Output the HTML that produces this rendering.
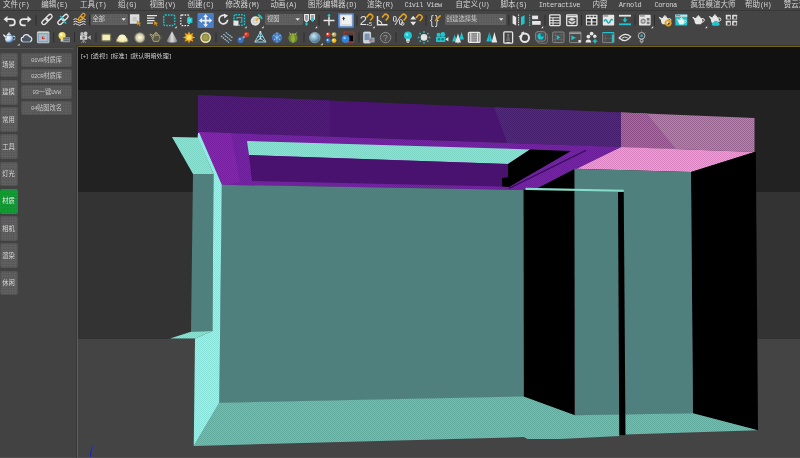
<!DOCTYPE html>
<html><head><meta charset="utf-8"><title>3ds Max</title>
<style>
html,body{margin:0;padding:0;background:#444;}
body{width:800px;height:458px;overflow:hidden;position:relative;font-family:"Liberation Mono",monospace;}
#root{position:absolute;left:0;top:0;width:800px;height:458px;background:#444444;overflow:hidden}
#menubar{position:absolute;left:0;top:0;width:800px;height:10px;background:#444}
#menuline{position:absolute;left:0;top:10px;width:800px;height:1px;background:#383838}
#toolbar{position:absolute;left:0;top:11px;width:800px;height:35px;background:#444}
#leftpanel{position:absolute;left:0;top:46px;width:77px;height:412px;background:#424242}
#leftline{position:absolute;left:0;top:48px;width:73px;height:1px;background:#545454}
.tab{position:absolute;left:0;width:18px;height:24.8px;border-radius:2px;background-color:#5f5f5f;background-image:radial-gradient(#474747 0.45px,rgba(71,71,71,0) 0.7px);background-size:2.5px 2.5px;box-shadow:inset 0 0 0 0.6px #4c4c4c}
.tab.g{background:#119c2d;box-shadow:none;background-image:radial-gradient(#1a7a58 0.45px,rgba(26,122,88,0) 0.7px);background-size:3.1px 3.1px;}
.btn{position:absolute;left:20.5px;width:51px;height:14.4px;border-radius:2px;background-color:#5c5c5c;background-image:radial-gradient(#474747 0.45px,rgba(71,71,71,0) 0.7px);background-size:2.5px 2.5px;box-shadow:inset 0 0 0 0.6px #4c4c4c}
#viewport{position:absolute;left:77px;top:46px;width:723px;height:412px;background:#111}
.band{position:absolute;left:0;width:723px}
#vpshadow{position:absolute;left:76px;top:45px;width:724px;height:413px;box-sizing:border-box;border-left:1px solid #383838;border-top:1px solid #383838;border-top-left-radius:2px}
#vpborder{border-top-left-radius:1.5px;position:absolute;left:77px;top:46px;width:723px;height:412px;box-sizing:border-box;border-left:1px solid #73621a;border-top:1px solid #73621a;}
svg{position:absolute;left:0;top:0;overflow:visible}
#txt{filter:blur(0.35px)}
#icons{filter:blur(0.3px)}
text{font-family:"Liberation Mono",monospace}
text.cj{font-family:"Liberation Sans","Noto Sans CJK SC",sans-serif}
.dd{position:absolute;top:14px;height:10.5px;background:#606060;border-radius:1px;background-image:radial-gradient(#4c4c4c 0.45px,rgba(76,76,76,0) 0.7px);background-size:2.5px 2.5px;}
</style></head><body><div id="root">
<div id="menubar"></div><div id="menuline"></div><div id="toolbar"></div>
<div class="dd" style="left:90.5px;width:37px"></div>
<div class="dd" style="left:265px;width:37.5px"></div>
<div class="dd" style="left:444.5px;width:61px"></div>
<div id="leftpanel"></div><div id="leftline"></div>
<div class="tab" style="top:52.6px"></div><div class="tab" style="top:79.8px"></div><div class="tab" style="top:107.1px"></div><div class="tab" style="top:134.3px"></div><div class="tab" style="top:161.6px"></div><div class="tab g" style="top:188.8px"></div><div class="tab" style="top:216.1px"></div><div class="tab" style="top:243.3px"></div><div class="tab" style="top:270.6px"></div><div class="btn" style="top:52.5px"></div><div class="btn" style="top:68.5px"></div><div class="btn" style="top:84.5px"></div><div class="btn" style="top:100.5px"></div>
<div id="viewport">
<div class="band" style="top:0;height:44px;background:#111111"></div>
<div class="band" style="top:44px;height:101.5px;background:#222222"></div>
<div class="band" style="top:145.5px;height:147px;background:#333333"></div>
<div class="band" style="top:292.5px;height:120px;background:#444444"></div>
</div>
<svg id="scene" width="800" height="458" viewBox="0 0 800 458" shape-rendering="geometricPrecision"><defs><pattern id="pfloor" width="2" height="2" patternUnits="userSpaceOnUse"><rect width="2" height="2" fill="#72c0a8"/><rect width="1" height="1" fill="#60aa9e"/><rect x="1" y="1" width="1" height="1" fill="#60aa9e"/></pattern><pattern id="pstrip" width="2" height="2" patternUnits="userSpaceOnUse"><rect width="2" height="2" fill="#9ef0e8"/><rect width="1" height="1" fill="#88e2da"/><rect x="1" y="1" width="1" height="1" fill="#88e2da"/></pattern><pattern id="pcyan" width="2" height="2" patternUnits="userSpaceOnUse"><rect width="2" height="2" fill="#8fe2d1"/><rect width="1" height="1" fill="#7dd6c5"/><rect x="1" y="1" width="1" height="1" fill="#7dd6c5"/></pattern><pattern id="ppinku" width="2" height="2" patternUnits="userSpaceOnUse"><rect width="2" height="2" fill="#eba0d3"/><rect width="1" height="1" fill="#d984c1"/><rect x="1" y="1" width="1" height="1" fill="#d984c1"/></pattern><pattern id="ppinkf" width="2" height="2" patternUnits="userSpaceOnUse"><rect width="2" height="2" fill="#bd80ae"/><rect width="1" height="1" fill="#97648f"/><rect x="1" y="1" width="1" height="1" fill="#97648f"/></pattern><pattern id="ppinkf2" width="2" height="2" patternUnits="userSpaceOnUse"><rect width="2" height="2" fill="#ae6aa4"/><rect width="1" height="1" fill="#8a4a84"/><rect x="1" y="1" width="1" height="1" fill="#8a4a84"/></pattern><pattern id="plp" width="2" height="2" patternUnits="userSpaceOnUse"><rect width="2" height="2" fill="#7a24ab"/><rect width="1" height="1" fill="#6a1c99"/><rect x="1" y="1" width="1" height="1" fill="#6a1c99"/></pattern><pattern id="plp2" width="2" height="2" patternUnits="userSpaceOnUse"><rect width="2" height="2" fill="#8628b2"/><rect width="1" height="1" fill="#781ea0"/><rect x="1" y="1" width="1" height="1" fill="#781ea0"/></pattern><pattern id="pdp1" width="2" height="2" patternUnits="userSpaceOnUse"><rect width="2" height="2" fill="#521c80"/><rect width="1" height="1" fill="#46146c"/><rect x="1" y="1" width="1" height="1" fill="#46146c"/></pattern><pattern id="pdp3" width="2" height="2" patternUnits="userSpaceOnUse"><rect width="2" height="2" fill="#522a84"/><rect width="1" height="1" fill="#461e6e"/><rect x="1" y="1" width="1" height="1" fill="#461e6e"/></pattern></defs>
<!-- top front face dark purple -->
<polygon points="198,95 621,112.5 621,147 198,132" fill="#481470"/>
<polygon points="198,95 330,100.5 330,136.7 198,132" fill="url(#pdp1)"/>
<polygon points="494,107.3 621,112.5 621,147 507.5,143" fill="url(#pdp3)"/>
<!-- pink front face -->
<polygon points="621,112.5 754.5,118 754.5,152 621,147" fill="url(#ppinkf)"/>
<polygon points="621,112.5 647,113.6 676,149 621,147" fill="url(#ppinkf2)"/>
<!-- pink underside -->
<polygon points="621,147 754.5,152 691,172 575,168.75" fill="url(#ppinku)"/>
<!-- light purple underside frame -->
<polygon points="198,132 621,147 537,188.5 523,190 222,185" fill="url(#plp)"/>
<polygon points="198,132 231,133.2 240,182 222,185" fill="url(#plp2)"/>
<!-- recess: cyan panel -->
<polygon points="247,141 530,149.4 508,164 249,155" fill="url(#pcyan)"/>
<!-- recess: inner dark face -->
<polygon points="249,155 508,164 508,177 502,178 502,186.5 252,181" fill="#48126e"/>
<!-- recess: black -->
<polygon points="530,149.4 571,151 509,187 502,186.5 502,178 508,177 508,164" fill="#000"/>
<!-- beam groove -->
<line x1="586" y1="150.3" x2="509" y2="188.3" stroke="#3a1060" stroke-width="1.5"/>
<!-- black door + triangle -->
<polygon points="523.3,190 537,188.5 574.5,169 574.5,416 523.75,397" fill="#000"/>
<!-- right black region -->
<polygon points="691,172 754.5,152 755.8,152 758,430.5 693,413.5" fill="#000"/>
<!-- left outside cyan triangle -->
<polygon points="172,137 198,137.4 213.5,174 193,174" fill="url(#pcyan)"/>
<!-- left teal segment -->
<polygon points="193,174 213.5,174 212.5,331 191,331.75" fill="#4f807d"/>
<!-- small sticking quad -->
<polygon points="170,338.5 191,331.75 212.5,331 195,338.5" fill="url(#pcyan)"/>
<!-- back wall -->
<polygon points="221.5,184.8 523.5,190 523.75,397 219.25,403" fill="#4f807d"/>
<!-- right walls -->
<polygon points="574.5,168.75 691,172 693,413.5 575,415.5" fill="#4f807d"/>
<!-- floor -->
<polygon points="219.25,402.75 523.75,396.5 575,415.25 693,413.25 758,430.25 625.5,434.5 620,436 560,439 527.5,439 523.75,437 360,441.5 193.75,446" fill="url(#pfloor)"/>
<!-- light strip left -->
<polygon points="198,133 199.3,133 221.8,184.8 219.25,402.75 193.75,446 195,338.5 212.5,331 213.5,174 197.6,137.4" fill="url(#pstrip)"/>
<!-- light cyan strip over door -->
<polygon points="525.5,187.7 623.75,189.7 623.75,191.8 525.5,189.9" fill="#86dcc9"/>
<!-- black sliver -->
<polygon points="618,192 623.75,192 625.5,435 619.25,435.7" fill="#000"/>
<!-- axis -->
<path d="M91.6 449.5Q90.6 451 90.6 458" stroke="#1c22b8" stroke-width="1.1" fill="none"/>
<path d="M91.4 445.8h2.2l-2 2.6h2.2" stroke="#2430d8" stroke-width="0.8" fill="none"/>
</svg>

<div style="position:absolute;left:0;top:457px;width:800px;height:1px;background:#505050"></div><div id="vpshadow"></div><div id="vpborder"></div>
<svg id="icons" width="800" height="458" viewBox="0 0 800 458"><rect x="35.50" y="15.00" width="1" height="10.50" fill="#2c2c2c"/><rect x="89.00" y="15.00" width="1" height="10.50" fill="#2c2c2c"/><rect x="318.50" y="15.00" width="1" height="10.50" fill="#2c2c2c"/><rect x="356.50" y="15.00" width="1" height="10.50" fill="#2c2c2c"/><rect x="425.50" y="15.00" width="1" height="10.50" fill="#2c2c2c"/><rect x="508.25" y="15.00" width="1" height="10.50" fill="#2c2c2c"/><rect x="544.50" y="15.00" width="1" height="10.50" fill="#2c2c2c"/><rect x="581.00" y="15.00" width="1" height="10.50" fill="#2c2c2c"/><rect x="634.50" y="15.00" width="1" height="10.50" fill="#2c2c2c"/><rect x="654.00" y="15.00" width="1" height="10.50" fill="#2c2c2c"/><rect x="53.25" y="32.50" width="1" height="10.00" fill="#2c2c2c"/><rect x="74.00" y="32.50" width="1" height="10.00" fill="#2c2c2c"/><rect x="95.50" y="32.50" width="1" height="10.00" fill="#2c2c2c"/><rect x="215.50" y="32.50" width="1" height="10.00" fill="#2c2c2c"/><rect x="303.50" y="32.50" width="1" height="10.00" fill="#2c2c2c"/><rect x="358.50" y="32.50" width="1" height="10.00" fill="#2c2c2c"/><rect x="395.50" y="32.50" width="1" height="10.00" fill="#2c2c2c"/><g transform="translate(3.50 13.00)"><path d="M2.5 6.2H8.3A3.1 3.1 0 0 1 8.3 12.4H5.8" fill="none" stroke="#e6e6e6" stroke-width="1.7"/><path d="M0 6.2L4 3V9.4z" fill="#e6e6e6"/></g><g transform="translate(31.50 13.00)"><g transform="scale(-1 1)"><path d="M2.5 6.2H8.3A3.1 3.1 0 0 1 8.3 12.4H5.8" fill="none" stroke="#e6e6e6" stroke-width="1.7"/><path d="M0 6.2L4 3V9.4z" fill="#e6e6e6"/></g></g><g transform="translate(41.00 12.50)"><g transform="rotate(-45 6 7)" fill="none" stroke="#e6e6e6" stroke-width="1.3"><rect x="-0.4" y="5" width="7.2" height="4" rx="2"/><rect x="5.2" y="5" width="7.2" height="4" rx="2"/></g></g><g transform="translate(57.00 12.50)"><g transform="rotate(-45 6 7)" fill="none" stroke="#e6e6e6" stroke-width="1.3"><rect x="-0.4" y="5" width="7.2" height="4" rx="2"/><rect x="5.2" y="5" width="7.2" height="4" rx="2"/></g><path d="M3.2 3.5L6.2 6.5M6.5 8.2L9.2 11" stroke="#1fc4cc" stroke-width="1.4"/></g><g transform="translate(73.00 13.00)"><path d="M0.5 6.5q2 -1.6 4 0t4 0t4 0M0.5 9q2 -1.6 4 0t4 0t4 0M0.5 11.5q2 -1.6 4 0t4 0t4 0" fill="none" stroke="#e6e6e6" stroke-width="1"/><g transform="rotate(-50 8.5 4.5)" fill="none" stroke="#e8a21c" stroke-width="1.2"><rect x="4.5" y="2.9" width="5" height="3" rx="1.5"/><rect x="8.3" y="2.9" width="5" height="3" rx="1.5"/></g></g><g transform="translate(130.00 13.00)"><rect x="0.3" y="1.8" width="8.6" height="8.4" fill="#d9d9d9" stroke="#f0f0f0" stroke-width="0.8"/><rect x="2.6" y="4" width="4" height="4" fill="#c4c4c4"/><path d="M7 8l4.2 2.2l-1.7 0.5l1 2l-0.9 0.5l-1 -2l-1.3 1.3z" fill="#e8a21c" stroke="#7a5200" stroke-width="0.3"/></g><g transform="translate(147.00 13.00)"><path d="M0 2.7H10M0 5.2H7.5M0 7.7H7.5M0 10.2H6" stroke="#e6e6e6" stroke-width="1.3"/><path d="M7 8l4.2 2.2l-1.7 0.5l1 2l-0.9 0.5l-1 -2l-1.3 1.3z" fill="#e8a21c" stroke="#7a5200" stroke-width="0.3"/></g><g transform="translate(162.50 13.00)"><rect x="1.2" y="2" width="11" height="10.6" rx="1.5" fill="none" stroke="#1fc4cc" stroke-width="1.5" stroke-dasharray="1.7 1.1"/></g><path d="M174.50 28.30l2.2 -2.2v2.2z" fill="#e0e0e0"/><g transform="translate(180.00 13.00)"><rect x="0.8" y="2" width="8.2" height="10.6" rx="1" fill="none" stroke="#e6e6e6" stroke-width="1.3" stroke-dasharray="1.6 1.2"/><rect x="7" y="4.6" width="5.4" height="5.4" fill="#1fc4cc"/><rect x="8.4" y="6" width="2.6" height="2.6" fill="#4fe0e6"/></g><rect x="197.5" y="13" width="16.3" height="15" rx="1" fill="#4b7fc9"/><g transform="translate(198.60 13.40)"><path d="M7 0.6L9.5 3.6H7.9V6.3H10.6V4.7L13.6 7.2L10.6 9.7V8.1H7.9V10.8H9.5L7 13.8L4.5 10.8H6.1V8.1H3.4V9.7L0.4 7.2L3.4 4.7V6.3H6.1V3.6H4.5z" fill="#eeeeee"/></g><g transform="translate(217.50 13.00)"><path d="M8.6 3.3A4.3 4.3 0 1 0 10.1 6.8" fill="none" stroke="#e6e6e6" stroke-width="1.7"/><path d="M6.3 0.6L10.6 2.6L6.8 5.6z" fill="#e6e6e6"/></g><g transform="translate(232.50 13.00)"><rect x="1.6" y="1.8" width="10.4" height="10.4" rx="1.3" fill="none" stroke="#1fc4cc" stroke-width="1.5" stroke-dasharray="1.7 1.1"/><rect x="1" y="7.6" width="5" height="5" fill="#e6e6e6"/><path d="M4.5 6V4.5H9.3V9.3H7.8" fill="none" stroke="#1fc4cc" stroke-width="1.1"/></g><path d="M244.50 28.30l2.2 -2.2v2.2z" fill="#e0e0e0"/><g transform="translate(250.00 13.00)"><circle cx="5.4" cy="8" r="4.7" fill="#e2e2e2"/><circle cx="5.4" cy="8" r="2.3" fill="none" stroke="#bdbdbd" stroke-width="0.8"/><path d="M8 1.8A5 5 0 0 1 11.8 6.2" fill="none" stroke="#1fc4cc" stroke-width="1.7"/><path d="M5.6 7.8L9.6 3.8" stroke="#e8a21c" stroke-width="1.6"/></g><path d="M261.50 28.30l2.2 -2.2v2.2z" fill="#e0e0e0"/><g transform="translate(303.50 13.00)"><path d="M1 1.5H5V7L3 9L1 7zM7 1.5H11V6L9 8L7 6z" fill="#9a9a9a" stroke="#e6e6e6" stroke-width="1.1"/><path d="M3 9L4.6 11L3 13L1.4 11zM9 4.6L10.8 6.8L9 9L7.2 6.8z" fill="#1fc4cc"/></g><path d="M315.00 28.30l2.2 -2.2v2.2z" fill="#e0e0e0"/><g transform="translate(323.00 13.00)"><path d="M6 3.5V12.5M0.5 7.6H11.5" stroke="#e6e6e6" stroke-width="1.5"/><circle cx="6" cy="2.2" r="1.3" fill="#1fc4cc"/></g><rect x="338" y="13" width="16" height="15" rx="1.2" fill="#4b7fc9"/><g transform="translate(339.70 14.60)"><rect x="0" y="0" width="12.6" height="11.6" rx="1" fill="#dedede"/><rect x="1.6" y="1.2" width="9.4" height="8.2" rx="0.6" fill="#f2f2f2"/><path d="M3.9 2.2L5.6 4.2H4.5V5.6H3.3V4.2H2.2z" fill="#333"/></g><g transform="translate(360.00 13.00)"><text x="-0.3" y="12.4" font-size="13" fill="#e6e6e6" style="font-family:'Liberation Sans',sans-serif">2</text><rect x="7.2" y="11" width="1.3" height="1.3" fill="#e6e6e6"/><text x="9" y="12.6" font-size="5.5" fill="#e6e6e6" style="font-family:'Liberation Sans',sans-serif">5</text><g transform="translate(10 4) rotate(40)"><path d="M-2.4 2.6V-0.4A2.4 2.4 0 0 1 2.4 -0.4V2.6" fill="none" stroke="#e8a21c" stroke-width="1.5"/></g></g><path d="M372.50 28.30l2.2 -2.2v2.2z" fill="#e0e0e0"/><g transform="translate(376.00 13.00)"><path d="M1.5 3V11.8H11.5" fill="none" stroke="#e6e6e6" stroke-width="1.4"/><path d="M1.5 7.5A4.4 4.4 0 0 1 6 11.8" fill="none" stroke="#e6e6e6" stroke-width="1.1"/><g transform="translate(9.5 4) rotate(40)"><path d="M-2.4 2.6V-0.4A2.4 2.4 0 0 1 2.4 -0.4V2.6" fill="none" stroke="#e8a21c" stroke-width="1.5"/></g></g><g transform="translate(392.50 13.00)"><text x="0" y="12.3" font-size="12" fill="#e6e6e6" style="font-family:'Liberation Sans',sans-serif">%</text><g transform="translate(11 4) rotate(40)"><path d="M-2.4 2.6V-0.4A2.4 2.4 0 0 1 2.4 -0.4V2.6" fill="none" stroke="#e8a21c" stroke-width="1.5"/></g></g><g transform="translate(410.00 13.00)"><path d="M3.2 2.8L6.2 6.6H0.2zM3.2 12.6L6.2 8.8H0.2z" fill="#e6e6e6"/><g transform="translate(9.5 4.6) rotate(40)"><path d="M-2.4 2.6V-0.4A2.4 2.4 0 0 1 2.4 -0.4V2.6" fill="none" stroke="#e8a21c" stroke-width="1.5"/></g></g><circle cx="402.5" cy="23.8" r="1.5" fill="none" stroke="#e0e0e0" stroke-width="0.9"/><g transform="translate(430.00 13.00)"><text x="-0.3" y="11.4" font-size="12" fill="#cfcfcf" style="font-family:'Liberation Sans',sans-serif" letter-spacing="1">{}</text><path d="M5.2 7.8L10.6 2.4" stroke="#e8a21c" stroke-width="1.5"/></g><g transform="translate(512.00 13.00)"><path d="M0.6 2.2L4.2 4V12.4L0.6 10.4z" fill="#e6e6e6"/><path d="M12.6 2.2L9 4V12.4L12.6 10.4z" fill="#1fc4cc"/><path d="M6.6 1.5V13" stroke="#e6e6e6" stroke-width="1" stroke-dasharray="1.4 1"/></g><g transform="translate(528.50 13.00)"><path d="M1.2 1.6V13" stroke="#1fc4cc" stroke-width="1.2" stroke-dasharray="1.5 1"/><rect x="3.6" y="2.6" width="6" height="3.6" fill="#e6e6e6"/><rect x="3.6" y="8" width="8.6" height="3.8" fill="#e6e6e6"/></g><path d="M541.00 28.30l2.2 -2.2v2.2z" fill="#e0e0e0"/><g transform="translate(549.00 13.00)"><rect x="0.7" y="1.8" width="10.4" height="10.8" rx="0.8" fill="none" stroke="#e6e6e6" stroke-width="1.3"/><path d="M0.7 4.8H11.1M0.7 7.4H11.1M0.7 10H11.1M4 4.8V12.6" stroke="#e6e6e6" stroke-width="1"/></g><g transform="translate(566.00 13.00)"><rect x="0.7" y="1.8" width="10.4" height="10.8" rx="0.8" fill="none" stroke="#e6e6e6" stroke-width="1.3"/><path d="M0.7 3.6H11.1" stroke="#e6e6e6" stroke-width="1.6"/><path d="M5.9 5L9.2 6.4L5.9 7.8L2.6 6.4zM2.6 8L5.9 9.4L9.2 8V9L5.9 10.4L2.6 9zM2.6 9.8L5.9 11.2L9.2 9.8" fill="#e6e6e6" stroke="#e6e6e6" stroke-width="0.4"/></g><g transform="translate(585.60 13.00)"><rect x="0.3" y="1.8" width="11.6" height="10.8" rx="0.8" fill="#e6e6e6"/><rect x="1.4" y="2.8" width="2.4" height="1.5" fill="#444"/><rect x="4.8" y="2.8" width="2.4" height="1.5" fill="#444"/><rect x="8.2" y="2.8" width="2.4" height="1.5" fill="#444"/><rect x="1.4" y="6" width="3.8" height="2.4" fill="#333"/><rect x="6.8" y="6" width="3.8" height="2.4" fill="#333"/><rect x="1.4" y="9.4" width="3.8" height="2.2" fill="#333"/><rect x="6.8" y="9.4" width="3.8" height="2.2" fill="#333"/></g><g transform="translate(602.50 13.00)"><rect x="0.3" y="1.8" width="11.4" height="10.8" rx="0.8" fill="#e6e6e6"/><rect x="1" y="2.4" width="4.6" height="1.1" fill="#777"/><path d="M1.6 8.4q1.5 -3.4 3 0t3 0t2.6 -1" fill="none" stroke="#12a8b0" stroke-width="1.4"/></g><g transform="translate(618.75 13.00)"><rect x="0.2" y="1.8" width="12" height="1.8" fill="#e6e6e6"/><rect x="0.2" y="10.4" width="12" height="1.8" fill="#1fc4cc"/><path d="M6.2 4.4V8" stroke="#1fc4cc" stroke-width="1.6"/><path d="M3.6 6.6H8.8L6.2 9.6z" fill="#1fc4cc"/></g><g transform="translate(638.75 13.00)"><rect x="0.3" y="1.8" width="11.6" height="10.8" rx="0.8" fill="#e6e6e6"/><rect x="1" y="2.4" width="5" height="1.1" fill="#777"/><circle cx="4.4" cy="8.2" r="2.6" fill="#8a8a8a"/><circle cx="4.4" cy="8.2" r="1.2" fill="#c8c8c8"/><rect x="8" y="5" width="2.8" height="2.6" fill="#777"/><rect x="8" y="8.6" width="2.8" height="2.6" fill="#777"/></g><path d="M651.00 28.30l2.2 -2.2v2.2z" fill="#e0e0e0"/><g transform="translate(658.50 13.00)"><g transform="translate(0 0.00)"><path d="M2.9 5.2Q6.4 3.9 9.9 5.2Q11.2 8.6 8.8 11.2H4Q1.6 8.6 2.9 5.2z" fill="#e6e6e6"/><path d="M3.4 8.2L0.3 4.4L1.2 3.8L4.2 6z" fill="#e6e6e6"/><path d="M10 5.6Q12.8 5.4 12.4 7.4Q12 9 9.8 9.4" fill="none" stroke="#e6e6e6" stroke-width="1"/><ellipse cx="6.4" cy="4.2" rx="2.2" ry="0.9" fill="#e6e6e6"/><circle cx="6.4" cy="3" r="0.85" fill="#e6e6e6"/></g><circle cx="9.6" cy="10" r="2.5" fill="none" stroke="#e8a21c" stroke-width="1.7"/><circle cx="9.6" cy="10" r="3.2" fill="none" stroke="#e8a21c" stroke-width="0.9" stroke-dasharray="1 0.9"/></g><g transform="translate(675.00 13.00)"><rect x="0.3" y="1.6" width="12" height="11" rx="0.8" fill="#1fc4cc"/><rect x="0.3" y="1.6" width="12" height="2.2" fill="#d8d8d8"/><rect x="1" y="2.2" width="4.2" height="1" fill="#777"/><g transform="translate(1.3 2.6) scale(0.8)"><g transform="translate(0 0.00)"><path d="M2.9 5.2Q6.4 3.9 9.9 5.2Q11.2 8.6 8.8 11.2H4Q1.6 8.6 2.9 5.2z" fill="#f0f0f0"/><path d="M3.4 8.2L0.3 4.4L1.2 3.8L4.2 6z" fill="#f0f0f0"/><path d="M10 5.6Q12.8 5.4 12.4 7.4Q12 9 9.8 9.4" fill="none" stroke="#f0f0f0" stroke-width="1"/><ellipse cx="6.4" cy="4.2" rx="2.2" ry="0.9" fill="#f0f0f0"/><circle cx="6.4" cy="3" r="0.85" fill="#f0f0f0"/></g></g></g><g transform="translate(692.00 13.00)"><g transform="translate(0 0.00)"><path d="M2.9 5.2Q6.4 3.9 9.9 5.2Q11.2 8.6 8.8 11.2H4Q1.6 8.6 2.9 5.2z" fill="#e6e6e6"/><path d="M3.4 8.2L0.3 4.4L1.2 3.8L4.2 6z" fill="#e6e6e6"/><path d="M10 5.6Q12.8 5.4 12.4 7.4Q12 9 9.8 9.4" fill="none" stroke="#e6e6e6" stroke-width="1"/><ellipse cx="6.4" cy="4.2" rx="2.2" ry="0.9" fill="#e6e6e6"/><circle cx="6.4" cy="3" r="0.85" fill="#e6e6e6"/></g></g><path d="M705.00 28.30l2.2 -2.2v2.2z" fill="#e0e0e0"/><g transform="translate(708.50 12.20)"><g transform="translate(0 0.00)"><path d="M2.9 5.2Q6.4 3.9 9.9 5.2Q11.2 8.6 8.8 11.2H4Q1.6 8.6 2.9 5.2z" fill="#e6e6e6"/><path d="M3.4 8.2L0.3 4.4L1.2 3.8L4.2 6z" fill="#e6e6e6"/><path d="M10 5.6Q12.8 5.4 12.4 7.4Q12 9 9.8 9.4" fill="none" stroke="#e6e6e6" stroke-width="1"/><ellipse cx="6.4" cy="4.2" rx="2.2" ry="0.9" fill="#e6e6e6"/><circle cx="6.4" cy="3" r="0.85" fill="#e6e6e6"/></g><path d="M4.4 13.6A1.9 1.9 0 0 1 5 10A2.6 2.6 0 0 1 9.8 10.4A1.7 1.7 0 0 1 10.2 13.6z" fill="#1fc4cc"/></g><g transform="translate(725.80 13.00)"><rect x="0.0" y="1.8" width="5" height="4.6" rx="0.5" fill="#dcdcdc"/><rect x="1.6" y="3.4" width="2.6" height="2.4" fill="#444"/><rect x="0.0" y="7.8" width="5" height="4.6" rx="0.5" fill="#dcdcdc"/><rect x="1.6" y="9.4" width="2.6" height="2.4" fill="#444"/><rect x="6.3" y="1.8" width="5" height="4.6" rx="0.5" fill="#dcdcdc"/><rect x="7.9" y="3.4" width="2.6" height="2.4" fill="#444"/><rect x="6.3" y="7.8" width="5" height="4.6" rx="0.5" fill="#dcdcdc"/><rect x="7.9" y="9.4" width="2.6" height="2.4" fill="#444"/></g><defs><radialGradient id="rgb" cx="0.35" cy="0.35" r="0.7"><stop offset="0" stop-color="#fff"/><stop offset="0.55" stop-color="#c4dcf0"/><stop offset="1" stop-color="#3c74ae"/></radialGradient><radialGradient id="rgy" cx="0.5" cy="0.5" r="0.5"><stop offset="0" stop-color="#fffbe0"/><stop offset="0.7" stop-color="#e8e0a8"/><stop offset="1" stop-color="#8a845a"/></radialGradient><radialGradient id="rgs" cx="0.4" cy="0.35" r="0.7"><stop offset="0" stop-color="#cfe6f2"/><stop offset="0.6" stop-color="#6fa0bc"/><stop offset="1" stop-color="#34566c"/></radialGradient><linearGradient id="lgc" x1="0" x2="1"><stop offset="0" stop-color="#666"/><stop offset="0.5" stop-color="#ddd"/><stop offset="1" stop-color="#777"/></linearGradient></defs><g transform="translate(2.40 28.80)"><g transform="scale(1.05 1.12)"><g transform="translate(0 1.00)"><path d="M2.9 5.2Q6.4 3.9 9.9 5.2Q11.2 8.6 8.8 11.2H4Q1.6 8.6 2.9 5.2z" fill="url(#rgb)"/><path d="M3.4 8.2L0.3 4.4L1.2 3.8L4.2 6z" fill="url(#rgb)"/><path d="M10 5.6Q12.8 5.4 12.4 7.4Q12 9 9.8 9.4" fill="none" stroke="url(#rgb)" stroke-width="1"/><ellipse cx="6.4" cy="4.2" rx="2.2" ry="0.9" fill="url(#rgb)"/><circle cx="6.4" cy="3" r="0.85" fill="url(#rgb)"/></g></g></g><path d="M17.40 45.60l2.2 -2.2v2.2z" fill="#e0e0e0"/><g transform="translate(20.00 30.00)"><path d="M2.6 11.6A2.3 2.3 0 0 1 3 7.2A3.6 3.6 0 0 1 9.6 6.6A2.6 2.6 0 0 1 10.2 11.6z" fill="#4a5560" stroke="#e8eef6" stroke-width="1.2"/><path d="M2.6 11.6H10.2" stroke="#5b8fd0" stroke-width="1.2"/></g><g transform="translate(37.00 30.00)"><rect x="0.4" y="1.8" width="11.6" height="11" rx="0.6" fill="#8b9fb4" stroke="#cfd9e4" stroke-width="0.8"/><rect x="2" y="4.2" width="8.4" height="7" fill="#a9bdd0"/><circle cx="6.2" cy="7.8" r="1.5" fill="#d83020"/><circle cx="6.9" cy="7.2" r="0.8" fill="#f0d040"/><path d="M0.4 2.6H12" stroke="#d4e0d0" stroke-width="0.9"/></g><g transform="translate(57.50 30.00)"><circle cx="4.6" cy="5.6" r="3.6" fill="#f1dc62"/><circle cx="3.8" cy="4.6" r="1.6" fill="#fff8c0"/><rect x="3.2" y="9" width="2.8" height="2.6" fill="#d8d8d8"/><rect x="5.4" y="7.2" width="7" height="5" rx="0.5" fill="#8d97a2"/><path d="M6.2 8.6H11.6M6.2 10.4H11.6" stroke="#586068" stroke-width="0.8"/></g><g transform="translate(78.00 30.00)"><circle cx="4" cy="3.8" r="1.7" fill="#b8b8b8"/><circle cx="7.6" cy="3.4" r="1.9" fill="#c4c4c4"/><rect x="2" y="5.2" width="7.2" height="4.6" rx="0.6" fill="#d2d2d2"/><circle cx="5.6" cy="7.5" r="1.3" fill="#6a6a6a"/><path d="M9.2 7.5L12.8 5.2V9.8z" fill="#b0b0b0"/><path d="M5.6 9.8L3.4 13M5.6 9.8V13M5.6 9.8L7.8 13" stroke="#a0a0a0" stroke-width="0.8"/></g><g transform="translate(101.00 30.00)"><rect x="0.2" y="3.6" width="10" height="7.8" rx="1.4" fill="#7d7a56"/><rect x="1.4" y="4.8" width="7.6" height="5.4" rx="0.6" fill="#f3eeb8"/></g><g transform="translate(116.00 30.00)"><path d="M0.4 11.6A5.8 6.4 0 0 1 12 11.6Q6.2 13.4 0.4 11.6z" fill="#efe9b0" stroke="#8a845a" stroke-width="0.9"/><ellipse cx="6.2" cy="7.6" rx="3.6" ry="3" fill="#f8f4c8"/></g><g transform="translate(134.00 30.00)"><circle cx="5.8" cy="7.6" r="5.4" fill="#8e8a70"/><circle cx="5.8" cy="7.6" r="4.2" fill="#d9d5b4"/><circle cx="5.8" cy="7.6" r="2" fill="#f5f2d4"/></g><g transform="translate(149.60 30.20)"><g stroke="#b9b27c" stroke-width="0.8" stroke-linejoin="round"><g transform="translate(0 0.00)"><path d="M2.9 5.2Q6.4 3.9 9.9 5.2Q11.2 8.6 8.8 11.2H4Q1.6 8.6 2.9 5.2z" fill="#5e5b44"/><path d="M3.4 8.2L0.3 4.4L1.2 3.8L4.2 6z" fill="#5e5b44"/><path d="M10 5.6Q12.8 5.4 12.4 7.4Q12 9 9.8 9.4" fill="none" stroke="#5e5b44" stroke-width="1"/><ellipse cx="6.4" cy="4.2" rx="2.2" ry="0.9" fill="#5e5b44"/><circle cx="6.4" cy="3" r="0.85" fill="#5e5b44"/></g></g></g><g transform="translate(166.00 30.00)"><path d="M6 1.2L11.6 11.4Q6 13.8 0.4 11.4z" fill="url(#lgc)"/></g><g transform="translate(183.00 30.00)"><polygon points="6.00,1.20 7.30,4.26 10.38,3.02 9.14,6.10 12.20,7.40 9.14,8.70 10.38,11.78 7.30,10.54 6.00,13.60 4.70,10.54 1.62,11.78 2.86,8.70 -0.20,7.40 2.86,6.10 1.62,3.02 4.70,4.26" fill="#f0a418"/><circle cx="6" cy="7.4" r="2.6" fill="#f8d84a"/><path d="M4.6 8.6L7.6 5.8" stroke="#fff2a0" stroke-width="0.9"/></g><g transform="translate(200.00 30.00)"><circle cx="5.6" cy="7.6" r="5.4" fill="#f0e8a8"/><circle cx="5.6" cy="7.6" r="4" fill="#8e8a48"/><circle cx="5.6" cy="7.6" r="2.6" fill="#a39c50"/></g><g transform="translate(220.00 30.00)"><path d="M1 6L9 12.6M3.4 4.2L11.4 10.8M5.8 2.4L13 8.2" stroke="#9fc6e4" stroke-width="1.2" stroke-dasharray="1.6 0.7"/></g><g transform="translate(237.00 30.00)"><path d="M3.4 10L9.6 4.6" stroke="#90a0b8" stroke-width="2.2"/><circle cx="9.6" cy="4.6" r="2.7" fill="#d43828"/><circle cx="9" cy="3.9" r="1" fill="#f09080"/><circle cx="3.6" cy="10" r="3.1" fill="#3b6fb8"/><circle cx="2.9" cy="9.2" r="1.1" fill="#8ab4e8"/></g><g transform="translate(254.00 30.00)"><path d="M6.4 2L12 12H0.8zM6.4 2V8.6M0.8 12L6.4 8.6L12 12M3.4 6.6L9.4 6.6" fill="none" stroke="#8fd2e8" stroke-width="1"/><circle cx="6.4" cy="2" r="1" fill="#c8ecf8"/><circle cx="6.4" cy="8.6" r="1" fill="#c8ecf8"/></g><g transform="translate(271.00 30.00)"><circle cx="6" cy="7.6" r="5.2" fill="#3f74b4"/><path d="M2.4 5.4L9.6 10M9.6 5.2L2.6 10.2M6 2.6V12.6" stroke="#9cc6ee" stroke-width="1.1" stroke-dasharray="1.4 0.8"/></g><g transform="translate(287.60 30.00)"><ellipse cx="5.4" cy="8" rx="4.6" ry="4.8" fill="#6e8a28"/><path d="M5.4 3.4V12.6M3.4 5L2 2.6M7.4 5L8.8 2.6" stroke="#c0d060" stroke-width="0.9"/><ellipse cx="5.4" cy="8.4" rx="2" ry="3" fill="#93ad3c"/></g><g transform="translate(309.00 30.00)"><circle cx="5.8" cy="7.6" r="5.2" fill="url(#rgs)" stroke="#a8c4d4" stroke-width="0.6"/></g><path d="M320.50 45.20l2.2 -2.2v2.2z" fill="#e0e0e0"/><g transform="translate(325.00 30.00)"><circle cx="3.2" cy="4.6" r="2.4" fill="#d83828"/><circle cx="2.6" cy="4" r="0.9" fill="#fff"/><circle cx="9" cy="4.6" r="2.4" fill="#b8a860"/><circle cx="8.4" cy="4" r="0.9" fill="#eee"/><circle cx="3.2" cy="10.6" r="2.4" fill="#2a78d0"/><circle cx="2.6" cy="10" r="0.9" fill="#bfe0ff"/><circle cx="9" cy="10.6" r="2.4" fill="#f0b818"/><circle cx="8.4" cy="10" r="0.9" fill="#fff0a0"/></g><g transform="translate(341.00 30.00)"><rect x="3" y="2" width="10" height="10.6" fill="none" stroke="#d83828" stroke-width="0.9" stroke-dasharray="1.2 0.9"/><rect x="7" y="5.6" width="5" height="5.4" fill="#000"/><circle cx="4.6" cy="9" r="3.9" fill="#2f84d6"/><circle cx="3.6" cy="8" r="1.3" fill="#8cc4f4"/></g><g transform="translate(362.00 30.00)"><rect x="1.6" y="2" width="7" height="11" rx="0.8" fill="#c4cfdc" stroke="#eef2f6" stroke-width="0.7"/><rect x="2.6" y="3.6" width="5" height="6.4" fill="#7d93ad"/><rect x="7" y="7.6" width="5.6" height="5" rx="0.6" fill="#8da2b8"/><path d="M8 10H10.2" stroke="#d84030" stroke-width="1.2"/></g><g transform="translate(380.00 30.00)"><circle cx="5.6" cy="7.6" r="5.2" fill="#4c4c4c" stroke="#8c8c8c" stroke-width="1"/><text x="3.1" y="10.6" font-size="8.5" fill="#9a9a9a" style="font-family:'Liberation Sans',sans-serif">?</text></g><g transform="translate(403.50 30.00)"><circle cx="4.4" cy="5.6" r="4" fill="#1fc4cc"/><circle cx="3.4" cy="4.6" r="1.4" fill="#7fe6ea"/><path d="M2.6 8.8H6.2V11.6H2.6z" fill="#d8d8d8"/><path d="M3.2 12.4H5.6" stroke="#d8d8d8" stroke-width="0.9"/></g><g transform="translate(418.00 30.00)"><circle cx="6.00" cy="2.00" r="0.9" fill="#1fc4cc"/><circle cx="9.82" cy="3.58" r="0.9" fill="#1fc4cc"/><circle cx="11.40" cy="7.40" r="0.9" fill="#1fc4cc"/><circle cx="9.82" cy="11.22" r="0.9" fill="#1fc4cc"/><circle cx="6.00" cy="12.80" r="0.9" fill="#1fc4cc"/><circle cx="2.18" cy="11.22" r="0.9" fill="#1fc4cc"/><circle cx="0.60" cy="7.40" r="0.9" fill="#1fc4cc"/><circle cx="2.18" cy="3.58" r="0.9" fill="#1fc4cc"/><circle cx="6" cy="7.4" r="3.3" fill="#e4e4e4"/></g><g transform="translate(435.00 30.00)"><circle cx="3.6" cy="4.8" r="2" fill="#1fc4cc"/><circle cx="7.8" cy="4.4" r="2.4" fill="#1fc4cc"/><rect x="1" y="6.4" width="9.4" height="5.6" rx="0.8" fill="#1fc4cc"/><path d="M10.4 9.2L13.4 7V11.6z" fill="#e6e6e6"/><circle cx="4" cy="9.2" r="1.2" fill="#177" /><circle cx="7.6" cy="9.2" r="1.2" fill="#177"/></g><g transform="translate(452.00 30.00)"><path d="M2.6 4.6L5 11.6H0.2z" fill="#1fc4cc"/><path d="M9.6 2L12 9.6H7.2z" fill="#1fc4cc"/><path d="M6 3.6L9 12.4H3z" fill="#e6e6e6"/><rect x="5.4" y="12.2" width="1.2" height="1" fill="#e6e6e6"/></g><g transform="translate(468.00 30.00)"><rect x="0.4" y="2.4" width="11.6" height="10" rx="1" fill="#8a8a8a" stroke="#e6e6e6" stroke-width="1.2"/><path d="M2.8 2.4V12.4M9.6 2.4V12.4" stroke="#e6e6e6" stroke-width="1.1"/><path d="M3.4 5H9M3.4 7.4H9M3.4 9.8H9" stroke="#b0b0b0" stroke-width="0.8"/></g><g transform="translate(486.00 30.00)"><path d="M3.4 2L6.4 11.6H0.4z" fill="#1fc4cc"/><path d="M8.4 2L11.2 12.4H5.6z" fill="#e6e6e6"/><path d="M3.4 2V11.6" stroke="#0c8088" stroke-width="0.6"/></g><g transform="translate(503.00 30.00)"><rect x="0.8" y="1.8" width="8.8" height="11.4" rx="1" fill="none" stroke="#e6e6e6" stroke-width="1.3"/><path d="M5.2 3.6L7.4 11H3z" fill="#6c6c6c"/><circle cx="5.2" cy="5" r="1.2" fill="#777"/><path d="M3.4 12.6H7" stroke="#e6e6e6" stroke-width="1"/></g><g transform="translate(518.00 30.00)"><circle cx="6.8" cy="7.8" r="4.2" fill="none" stroke="#e6e6e6" stroke-width="2"/><path d="M0.4 6.6L4.6 4.2L4 8.6z" fill="#e6e6e6"/><path d="M3.4 3.4L6 2" stroke="#e6e6e6" stroke-width="1.4"/></g><g transform="translate(535.00 30.00)"><rect x="2.4" y="3.6" width="10" height="9.6" rx="2" fill="none" stroke="#7c7c7c" stroke-width="0.9"/><rect x="0.6" y="1.6" width="10" height="9.6" rx="2.4" fill="#505050" stroke="#8a8a8a" stroke-width="0.9"/><circle cx="5.6" cy="6.4" r="3.1" fill="#1fc4cc"/><path d="M5.6 3.3A3.1 3.1 0 0 1 8.7 6.4H5.6z" fill="#126a70"/></g><g transform="translate(552.00 30.00)"><rect x="0.6" y="2" width="11.4" height="10.6" rx="1" fill="#4c4c4c" stroke="#8c8c8c" stroke-width="0.9"/><path d="M0.6 5.2H12M0.6 9.6H12M3.4 2V12.6M9.2 2V12.6" stroke="#6c6c6c" stroke-width="0.7"/><path d="M4.8 5.2L8.6 7.4L4.8 9.6z" fill="#1fc4cc"/></g><g transform="translate(569.00 30.00)"><rect x="0.6" y="2" width="11.4" height="10.6" rx="0.6" fill="#4c4c4c" stroke="#8c8c8c" stroke-width="0.9"/><path d="M0.6 3.2H12" stroke="#a8a8a8" stroke-width="1.4"/><path d="M2.4 5.4L6.8 7.8L2.4 10.2z" fill="#1fc4cc"/><rect x="9.4" y="10" width="2.4" height="2.4" fill="#e6e6e6"/></g><g transform="translate(585.00 30.00)"><circle cx="3.4" cy="6.6" r="1.9" fill="#e6e6e6"/><circle cx="6.6" cy="3.6" r="1.9" fill="#e6e6e6"/><circle cx="9.8" cy="6.2" r="1.7" fill="#e6e6e6"/><path d="M0.6 12.6A2.8 3 0 0 1 6.2 12.6z" fill="#e6e6e6"/><path d="M10 8.2L10.9 10.3L13 11.2L10.9 12.1L10 14.2L9.1 12.1L7 11.2L9.1 10.3z" fill="#1fc4cc"/></g><g transform="translate(602.00 30.00)"><rect x="0.6" y="2.6" width="11.4" height="10" rx="0.6" fill="#4c4c4c" stroke="#8c8c8c" stroke-width="0.9"/><path d="M0.6 2.6H12" stroke="#1fc4cc" stroke-width="1.2"/><path d="M3.6 5V12.6M0.6 8.6H9.6" stroke="#666" stroke-width="0.7"/><rect x="9.8" y="4.4" width="2.2" height="8" fill="#1fc4cc"/></g><g transform="translate(618.50 30.00)"><path d="M0.6 8Q6 1.6 12.2 6.6Q7 13.8 0.6 8z" fill="none" stroke="#e6e6e6" stroke-width="1.2"/><path d="M3.4 8.2Q6 6 9.4 8" fill="none" stroke="#e6e6e6" stroke-width="0.9"/></g><g transform="translate(636.60 30.00)"><circle cx="5" cy="5.8" r="3.3" fill="none" stroke="#bdbdbd" stroke-width="1"/><circle cx="5" cy="5.8" r="1.2" fill="#1fc4cc"/><path d="M3.6 9.6H6.4V11.8H3.6zM4.2 12.8H5.8" stroke="#bdbdbd" stroke-width="0.9" fill="none"/><path d="M5 0.6V1.6M1 2.4L1.8 3M9 2.4L8.2 3" stroke="#999" stroke-width="0.7"/></g><path d="M121.5 18.2h4.4l-2.2 2.6z" fill="#e4e4e4"/><path d="M295.5 18.2h4.4l-2.2 2.6z" fill="#e4e4e4"/><path d="M499.0 18.2h4.4l-2.2 2.6z" fill="#e4e4e4"/></svg>
<svg id="txt" width="800" height="458" viewBox="0 0 800 458"><text class="cj" x="3.00" y="7.20" font-size="7.5" fill="#d6d6d6">文件</text><text x="18.00" y="7.20" font-size="6.98" letter-spacing="-0.44" fill="#d6d6d6">(F)</text><text class="cj" x="41.25" y="7.20" font-size="7.5" fill="#d6d6d6">编辑</text><text x="56.25" y="7.20" font-size="6.98" letter-spacing="-0.44" fill="#d6d6d6">(E)</text><text class="cj" x="80.00" y="7.20" font-size="7.5" fill="#d6d6d6">工具</text><text x="95.00" y="7.20" font-size="6.98" letter-spacing="-0.44" fill="#d6d6d6">(T)</text><text class="cj" x="118.00" y="7.20" font-size="7.5" fill="#d6d6d6">组</text><text x="125.50" y="7.20" font-size="6.98" letter-spacing="-0.44" fill="#d6d6d6">(G)</text><text class="cj" x="149.40" y="7.20" font-size="7.5" fill="#d6d6d6">视图</text><text x="164.40" y="7.20" font-size="6.98" letter-spacing="-0.44" fill="#d6d6d6">(V)</text><text class="cj" x="187.50" y="7.20" font-size="7.5" fill="#d6d6d6">创建</text><text x="202.50" y="7.20" font-size="6.98" letter-spacing="-0.44" fill="#d6d6d6">(C)</text><text class="cj" x="225.60" y="7.20" font-size="7.5" fill="#d6d6d6">修改器</text><text x="248.10" y="7.20" font-size="6.98" letter-spacing="-0.44" fill="#d6d6d6">(M)</text><text class="cj" x="270.60" y="7.20" font-size="7.5" fill="#d6d6d6">动画</text><text x="285.60" y="7.20" font-size="6.98" letter-spacing="-0.44" fill="#d6d6d6">(A)</text><text class="cj" x="308.00" y="7.20" font-size="7.5" fill="#d6d6d6">图形编辑器</text><text x="345.50" y="7.20" font-size="6.98" letter-spacing="-0.44" fill="#d6d6d6">(D)</text><text class="cj" x="367.00" y="7.20" font-size="7.5" fill="#d6d6d6">渲染</text><text x="382.00" y="7.20" font-size="6.98" letter-spacing="-0.44" fill="#d6d6d6">(R)</text><text x="404.40" y="7.20" font-size="6.98" letter-spacing="-0.44" fill="#d6d6d6">Civil View</text><text class="cj" x="455.60" y="7.20" font-size="7.5" fill="#d6d6d6">自定义</text><text x="478.10" y="7.20" font-size="6.98" letter-spacing="-0.44" fill="#d6d6d6">(U)</text><text class="cj" x="500.60" y="7.20" font-size="7.5" fill="#d6d6d6">脚本</text><text x="515.60" y="7.20" font-size="6.98" letter-spacing="-0.44" fill="#d6d6d6">(S)</text><text x="538.75" y="7.20" font-size="6.98" letter-spacing="-0.44" fill="#d6d6d6">Interactive</text><text class="cj" x="592.50" y="7.20" font-size="7.5" fill="#d6d6d6">内容</text><text x="618.75" y="7.20" font-size="6.98" letter-spacing="-0.44" fill="#d6d6d6">Arnold</text><text x="654.40" y="7.20" font-size="6.98" letter-spacing="-0.44" fill="#d6d6d6">Corona</text><text class="cj" x="690.60" y="7.20" font-size="7.5" fill="#d6d6d6">疯狂模渲大师</text><text class="cj" x="745.00" y="7.20" font-size="7.5" fill="#d6d6d6">帮助</text><text x="760.00" y="7.20" font-size="6.98" letter-spacing="-0.44" fill="#d6d6d6">(H)</text><text class="cj" x="783.75" y="7.20" font-size="7.5" fill="#d6d6d6">赞云渲染</text><text class="cj" x="2.35" y="67.05" font-size="6.25" fill="#dadada">场景</text><text class="cj" x="2.35" y="94.30" font-size="6.25" fill="#dadada">建模</text><text class="cj" x="2.35" y="121.55" font-size="6.25" fill="#dadada">常用</text><text class="cj" x="2.35" y="148.80" font-size="6.25" fill="#dadada">工具</text><text class="cj" x="2.35" y="176.05" font-size="6.25" fill="#dadada">灯光</text><text class="cj" x="2.35" y="203.30" font-size="6.25" fill="#e8f0e8">材质</text><text class="cj" x="2.35" y="230.55" font-size="6.25" fill="#dadada">相机</text><text class="cj" x="2.35" y="257.80" font-size="6.25" fill="#dadada">渲染</text><text class="cj" x="2.35" y="285.05" font-size="6.25" fill="#dadada">休闲</text><text x="30.88" y="61.65" font-size="5.81" letter-spacing="-0.36" fill="#c6c6c6">01VR</text><text class="cj" x="43.38" y="61.65" font-size="6.25" fill="#c6c6c6">材质库</text><text x="30.88" y="77.65" font-size="5.81" letter-spacing="-0.36" fill="#c6c6c6">02CR</text><text class="cj" x="43.38" y="77.65" font-size="6.25" fill="#c6c6c6">材质库</text><text x="32.44" y="93.65" font-size="5.81" letter-spacing="-0.36" fill="#c6c6c6">03</text><text class="cj" x="38.69" y="93.65" font-size="6.25" fill="#c6c6c6">一键</text><text x="51.19" y="93.65" font-size="5.81" letter-spacing="-0.36" fill="#c6c6c6">UVW</text><text x="30.88" y="109.65" font-size="5.81" letter-spacing="-0.36" fill="#c6c6c6">04</text><text class="cj" x="37.12" y="109.65" font-size="6.25" fill="#c6c6c6">贴图改名</text><text x="80.30" y="57.72" font-size="5.67" letter-spacing="-0.90" fill="#d0d0d0">[+] [</text><text class="cj" x="92.80" y="57.72" font-size="6.1" fill="#d0d0d0">透视</text><text x="105.00" y="57.72" font-size="5.67" letter-spacing="-0.90" fill="#d0d0d0">] [</text><text class="cj" x="112.50" y="57.72" font-size="6.1" fill="#d0d0d0">标准</text><text x="124.70" y="57.72" font-size="5.67" letter-spacing="-0.90" fill="#d0d0d0">] [</text><text class="cj" x="132.20" y="57.72" font-size="6.1" fill="#d0d0d0">默认明暗处理</text><text x="168.80" y="57.72" font-size="5.67" letter-spacing="-0.90" fill="#d0d0d0">]</text><text class="cj" x="92.50" y="21.25" font-size="6.25" fill="#d0d0d0">全部</text><text class="cj" x="267.00" y="21.25" font-size="6.25" fill="#d0d0d0">视图</text><text class="cj" x="446.00" y="21.25" font-size="6.25" fill="#c4c4c4">创建选择集</text></svg>
</div></body></html>
